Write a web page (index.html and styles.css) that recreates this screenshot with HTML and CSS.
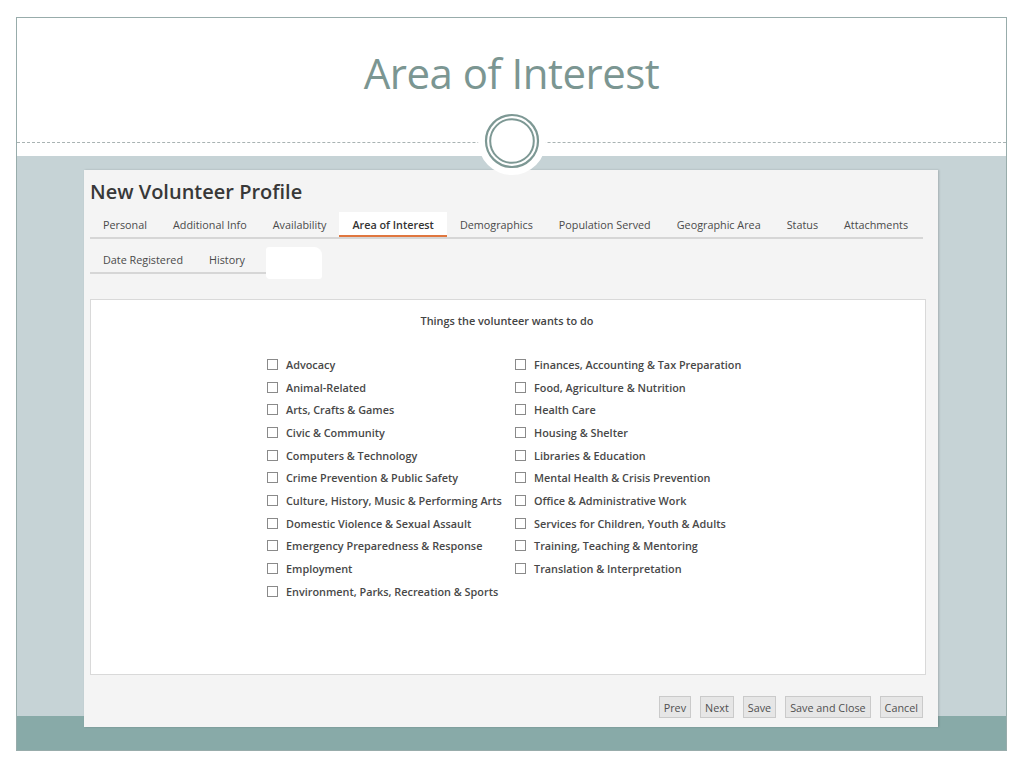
FILE: index.html
```html
<!DOCTYPE html>
<html lang="en">
<head>
<meta charset="utf-8">
<title>Area of Interest</title>
<link rel="stylesheet" href="styles.css">
</head>
<body>
<div class="slide">
  <header class="slide-head">
    <h1 class="slide-title">Area of Interest</h1>
    <div class="rule"></div>
    <svg class="ornament" width="72" height="72" viewBox="0 0 72 72" aria-hidden="true">
      <circle cx="36" cy="36" r="34" fill="#ffffff"/>
      <circle cx="36" cy="36" r="26" fill="none" stroke="#7d9894" stroke-width="2.2"/>
      <circle cx="36" cy="36" r="21.8" fill="none" stroke="#7d9894" stroke-width="2"/>
    </svg>
  </header>

  <section class="panel">
    <h2 class="profile-title">New Volunteer Profile</h2>
    <nav class="tabs">
      <span class="tab">Personal</span>
      <span class="tab">Additional Info</span>
      <span class="tab">Availability</span>
      <span class="tab active">Area of Interest</span>
      <span class="tab">Demographics</span>
      <span class="tab">Population Served</span>
      <span class="tab">Geographic Area</span>
      <span class="tab">Status</span>
      <span class="tab">Attachments</span>
    </nav>
    <div class="tabs-2-wrap">
      <nav class="tabs tabs-2">
        <span class="tab">Date Registered</span>
        <span class="tab">History</span>
      </nav>
      <span class="redact"></span>
    </div>

    <div class="box">
      <p class="box-title">Things the volunteer wants to do</p>
      <div class="checks">
        <ul class="col">
          <li><span class="cb"></span>Advocacy</li>
          <li><span class="cb"></span>Animal-Related</li>
          <li><span class="cb"></span>Arts, Crafts &amp; Games</li>
          <li><span class="cb"></span>Civic &amp; Community</li>
          <li><span class="cb"></span>Computers &amp; Technology</li>
          <li><span class="cb"></span>Crime Prevention &amp; Public Safety</li>
          <li><span class="cb"></span>Culture, History, Music &amp; Performing Arts</li>
          <li><span class="cb"></span>Domestic Violence &amp; Sexual Assault</li>
          <li><span class="cb"></span>Emergency Preparedness &amp; Response</li>
          <li><span class="cb"></span>Employment</li>
          <li><span class="cb"></span>Environment, Parks, Recreation &amp; Sports</li>
        </ul>
        <ul class="col">
          <li><span class="cb"></span>Finances, Accounting &amp; Tax Preparation</li>
          <li><span class="cb"></span>Food, Agriculture &amp; Nutrition</li>
          <li><span class="cb"></span>Health Care</li>
          <li><span class="cb"></span>Housing &amp; Shelter</li>
          <li><span class="cb"></span>Libraries &amp; Education</li>
          <li><span class="cb"></span>Mental Health &amp; Crisis Prevention</li>
          <li><span class="cb"></span>Office &amp; Administrative Work</li>
          <li><span class="cb"></span>Services for Children, Youth &amp; Adults</li>
          <li><span class="cb"></span>Training, Teaching &amp; Mentoring</li>
          <li><span class="cb"></span>Translation &amp; Interpretation</li>
        </ul>
      </div>
    </div>

    <div class="actions">
      <button class="btn">Prev</button>
      <button class="btn">Next</button>
      <button class="btn">Save</button>
      <button class="btn">Save and Close</button>
      <button class="btn">Cancel</button>
    </div>
  </section>
</div>
</body>
</html>
```

FILE: styles.css
```css
* { box-sizing: border-box; }

html, body {
  margin: 0;
  padding: 0;
  background: #ffffff;
  width: 1024px;
  height: 768px;
  overflow: hidden;
}

.slide {
  margin: 17px 0 0 16px;
  width: 991px;
  height: 734px;
  border: 1px solid #98acab;
  background: linear-gradient(to bottom,
    #ffffff 0, #ffffff 138px,
    #c6d3d6 138px, #c6d3d6 698px,
    #88aaa8 698px);
  overflow: hidden;
}

.slide-head {
  position: relative;
  height: 138px;
}

.slide-title {
  margin: 0;
  padding-top: 28px;
  text-align: center;
  font-family: "Open Sans", sans-serif;
  font-weight: 400;
  font-size: 42px;
  line-height: 54px;
  letter-spacing: -0.5px;
  color: #7b9692;
}

.rule {
  position: absolute;
  left: 0;
  right: 0;
  top: 124px;
  border-top: 1px dashed #a9b3b3;
}

.ornament {
  position: absolute;
  left: 459px;
  top: 87px;
  z-index: 2;
}

.panel {
  position: relative;
  z-index: 1;
  margin: 14px 0 0 67px;
  width: 854px;
  height: 557px;
  padding: 9px 12px 0 6px;
  background: #f4f4f4;
  box-shadow: 1px 0 2px rgba(0, 0, 0, 0.18);
  font-family: "Open Sans", sans-serif;
  color: #444;
}

.profile-title {
  margin: 0;
  font-size: 20px;
  font-weight: 600;
  line-height: 26px;
  color: #383838;
}

.tabs {
  display: flex;
  margin: 7px 3px 0 0;
  border-bottom: 2px solid #d6d6d6;
}

.tab {
  padding: 0 13px;
  font-size: 10.8px;
  line-height: 25px;
  color: #4a4a4a;
  white-space: nowrap;
}

.tab.active {
  background: #ffffff;
  color: #333;
  font-weight: 600;
  box-shadow: inset 0 -2px 0 #e0773f;
}

.tabs-2-wrap {
  display: flex;
  align-items: flex-start;
  margin-top: 9px;
}

.tabs-2 {
  display: inline-flex;
  margin: 0;
  padding-right: 8px;
}

.tabs-2 .tab {
  line-height: 24px;
}

.redact {
  width: 56px;
  height: 32px;
  background: #ffffff;
  border-radius: 3px 8px 3px 4px;
  margin-top: -1px;
}

.box {
  margin-top: 20px;
  width: 836px;
  height: 376px;
  background: #ffffff;
  border: 1px solid #d9d9d9;
  padding-top: 13px;
}

.box-title {
  margin: 0;
  text-align: center;
  font-size: 10.9px;
  font-weight: 600;
  line-height: 16px;
  color: #444;
  padding-right: 2px;
}

.checks {
  display: grid;
  grid-template-columns: 248px auto;
  margin: 24px 0 0 176px;
}

.col {
  list-style: none;
  margin: 0;
  padding: 0;
}

.col li {
  display: flex;
  align-items: center;
  height: 22.7px;
  font-size: 10.85px;
  font-weight: 600;
  color: #484848;
  white-space: nowrap;
}

.cb {
  display: inline-block;
  width: 11px;
  height: 11px;
  border: 1px solid #8a8a8a;
  background: #fff;
  margin-right: 8px;
  flex: none;
}

.actions {
  display: flex;
  justify-content: flex-end;
  gap: 9px;
  margin: 21px 3px 0 0;
}

.btn {
  height: 22px;
  padding: 0 4px;
  font-family: "Open Sans", sans-serif;
  font-size: 10.8px;
  color: #505050;
  background: #e6e6e6;
  border: 1px solid #cacaca;
  border-radius: 0;
}
```
